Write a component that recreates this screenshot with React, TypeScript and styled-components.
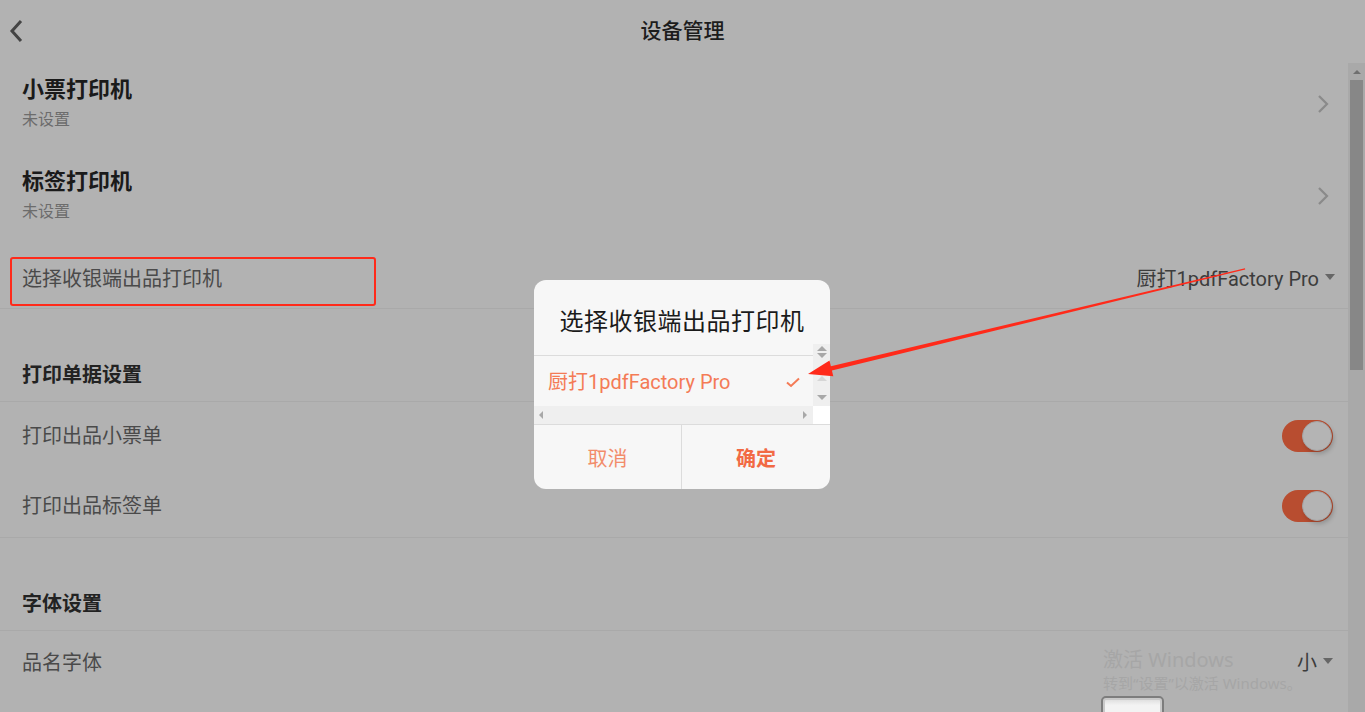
import React from 'react';
import styled, { createGlobalStyle } from 'styled-components';

const GlobalStyle = createGlobalStyle`
  html, body {
    margin: 0;
    padding: 0;
    height: 100%;
  }

  body {
    font-family: Roboto, "Noto Sans CJK SC", sans-serif;
    background: #b2b2b2;
    overflow: hidden;
  }

  #root {
    height: 100%;
  }
`;

const DIVIDER = '#a9a9a9';
const ORANGE = '#f47b56';

const BackIcon = () => (
  <svg width="16" height="24" viewBox="0 0 16 24">
    <path d="M13 2 L4 12 L13 22" fill="none" stroke="#444" strokeWidth="3" />
  </svg>
);

const ChevronIcon = () => (
  <svg width="14" height="20" viewBox="0 0 14 20">
    <path d="M3 2 L11 10 L3 18" fill="none" stroke="#8a8a8a" strokeWidth="2.2" />
  </svg>
);

const Caret = () => (
  <svg width="10" height="6" viewBox="0 0 10 6">
    <path d="M0 0 L10 0 L5 6 Z" fill="#666" />
  </svg>
);

const CheckIcon = () => (
  <svg width="14" height="11" viewBox="0 0 14 11">
    <path d="M1 5.5 L5 9 L13 1.5" fill="none" stroke={ORANGE} strokeWidth="2" />
  </svg>
);

const Arrow = () => (
  <ArrowLayer width="1365" height="712" viewBox="0 0 1365 712">
    <polygon
      points="1245,268.3 830.9,366.3 829.5,360.6 808,374 833.3,376.2 831.9,370.5 1245.2,269.6"
      fill="#ff2a1a"
    />
  </ArrowLayer>
);

const Toggle: React.FC = () => (
  <ToggleTrack>
    <ToggleKnob />
  </ToggleTrack>
);

export default function App() {
  return (
    <Page>
      <GlobalStyle />

      <Header>
        <BackButton>
          <BackIcon />
        </BackButton>

        <HeaderTitle>设备管理</HeaderTitle>
      </Header>

      <Body>
        <Content>
          <NavRow>
            <NavText>
              <NavTitle>小票打印机</NavTitle>
              <NavSub>未设置</NavSub>
            </NavText>
            <ChevronIcon />
          </NavRow>

          <NavRow>
            <NavText>
              <NavTitle>标签打印机</NavTitle>
              <NavSub>未设置</NavSub>
            </NavText>
            <ChevronIcon />
          </NavRow>

          <SelectRow>
            <HighlightBox />
            <RowLabel>选择收银端出品打印机</RowLabel>
            <SelectValue>
              厨打1pdfFactory Pro
              <Caret />
            </SelectValue>
          </SelectRow>

          <SectionHeader>打印单据设置</SectionHeader>

          <ToggleRow>
            <RowLabel>打印出品小票单</RowLabel>
            <Toggle />
          </ToggleRow>

          <ToggleRow $offset={4} $divided>
            <RowLabel>打印出品标签单</RowLabel>
            <Toggle />
          </ToggleRow>

          <SectionHeader>字体设置</SectionHeader>

          <ToggleRow $height={64}>
            <RowLabel>品名字体</RowLabel>
            <SelectValue>
              小
              <Caret />
            </SelectValue>
          </ToggleRow>

          <StepperRow>
            <StepperBox />
          </StepperRow>
        </Content>

        <ScrollTrack>
          <ScrollUp />
          <ScrollThumb />
        </ScrollTrack>
      </Body>

      <Watermark>
        <WatermarkTitle>激活 Windows</WatermarkTitle>
        <WatermarkSub>转到“设置”以激活 Windows。</WatermarkSub>
      </Watermark>

      <Dialog>
        <DialogTitle>选择收银端出品打印机</DialogTitle>

        <ListArea>
          <ListItem>厨打1pdfFactory Pro</ListItem>
          <CheckIcon />
        </ListArea>

        <HScroll>
          <HScrollBar>
            <SmallArrow $dir="left" />
            <SmallArrow $dir="right" />
          </HScrollBar>
          <ScrollCorner />
        </HScroll>

        <VScroll>
          <DoubleArrow>
            <SmallArrow $dir="up" />
            <SmallArrow $dir="down" />
          </DoubleArrow>
          <SmallArrow $dir="up" $faint />
          <SmallArrow $dir="down" />
        </VScroll>

        <DialogActions>
          <DialogButton>取消</DialogButton>
          <DialogButton $primary>确定</DialogButton>
        </DialogActions>
      </Dialog>

      <Arrow />
    </Page>
  );
}

const Page = styled.div`
  position: relative;
  height: 100vh;
  display: flex;
  flex-direction: column;
  background: #b2b2b2;
  overflow: hidden;
`;

const Header = styled.header`
  height: 63px;
  flex-shrink: 0;
  display: flex;
  align-items: center;
  justify-content: center;
  position: relative;
`;

const BackButton = styled.div`
  position: absolute;
  left: 8px;
  top: 19px;
  display: flex;
`;

const HeaderTitle = styled.h1`
  margin: 0;
  font-size: 21px;
  font-weight: 500;
  color: #1c1c1c;
  line-height: 28px;
  margin-top: -2px;
`;

const Body = styled.div`
  flex: 1;
  min-height: 0;
  display: flex;
`;

const Content = styled.div`
  flex: 1;
  overflow: hidden;
`;

const NavRow = styled.div`
  display: flex;
  align-items: center;
  justify-content: space-between;
  padding: 13px 18px 24px 22px;
  height: 55px;
`;

const NavText = styled.div`
  display: flex;
  flex-direction: column;
  gap: 5px;
`;

const NavTitle = styled.div`
  font-size: 22px;
  font-weight: 700;
  color: #1a1a1a;
  line-height: 28px;
`;

const NavSub = styled.div`
  font-size: 16px;
  color: #6c6c6c;
  line-height: 22px;
`;

const SelectRow = styled.div`
  position: relative;
  height: 62px;
  display: flex;
  align-items: center;
  justify-content: space-between;
  padding: 2px 13px 0 22px;
  border-bottom: 1px solid ${DIVIDER};
  box-sizing: border-box;
`;

const HighlightBox = styled.div`
  position: absolute;
  left: 10px;
  top: 10px;
  width: 362px;
  height: 45px;
  border: 2px solid #ff2a1a;
  border-radius: 3px;
`;

const RowLabel = styled.span`
  font-size: 20px;
  color: #4a4a4a;
  line-height: 26px;
`;

const SelectValue = styled.span`
  display: flex;
  align-items: center;
  gap: 6px;
  font-size: 20px;
  color: #3c3c3c;
  line-height: 26px;

  svg {
    margin-top: -4px;
  }
`;

const SectionHeader = styled.div`
  height: 93px;
  display: flex;
  align-items: flex-end;
  padding: 0 22px 13px;
  box-sizing: border-box;
  border-bottom: 1px solid ${DIVIDER};
  font-size: 20px;
  font-weight: 700;
  color: #222;
  line-height: 26px;
`;

const ToggleRow = styled.div<{ $offset?: number; $divided?: boolean; $height?: number }>`
  height: ${({ $height }) => $height ?? 68}px;
  display: flex;
  align-items: center;
  justify-content: space-between;
  padding: ${({ $offset }) => $offset ?? 0}px 15px 0 22px;
  box-sizing: border-box;
  border-bottom: ${({ $divided }) => ($divided ? `1px solid ${DIVIDER}` : 'none')};
`;

const StepperRow = styled.div`
  display: flex;
  justify-content: flex-end;
  padding: 1px 184px 0 0;
`;

const StepperBox = styled.div`
  width: 59px;
  height: 24px;
  border: 2px solid #7d7d7d;
  border-radius: 5px;
  background: linear-gradient(#d9d9d9, #f3f3f3 30%);
  box-shadow: inset 0 0 0 2px #c9c9c9;
`;

const ToggleTrack = styled.div`
  width: 51px;
  height: 32px;
  border-radius: 16px;
  background: #b84d30;
  display: flex;
  align-items: center;
  justify-content: flex-end;
  padding: 0 1px;
  box-sizing: border-box;
`;

const ToggleKnob = styled.div`
  width: 30px;
  height: 30px;
  border-radius: 50%;
  background: #b4b4b4;
  box-sizing: border-box;
  border: 1px solid #a4a4a4;
  box-shadow: 2px 3px 4px rgba(0, 0, 0, 0.18);
`;

const ScrollTrack = styled.div`
  width: 17px;
  flex-shrink: 0;
  background: #a9a9a9;
  display: flex;
  flex-direction: column;
  align-items: center;
`;

const ScrollUp = styled.div`
  margin-top: 7px;
  width: 0;
  height: 0;
  border-left: 4px solid transparent;
  border-right: 4px solid transparent;
  border-bottom: 4px solid #6f6f6f;
`;

const ScrollThumb = styled.div`
  margin-top: 6px;
  width: 13px;
  height: 290px;
  background: #878787;
`;

const Watermark = styled.div`
  position: absolute;
  left: 1103px;
  top: 647px;
  display: flex;
  flex-direction: column;
  pointer-events: none;
`;

const WatermarkTitle = styled.div`
  font-family: "Noto Sans", "Noto Sans CJK SC", sans-serif;
  font-size: 20px;
  line-height: 26px;
  color: #a6a6a6;
`;

const WatermarkSub = styled.div`
  font-family: "Noto Sans", "Noto Sans CJK SC", sans-serif;
  font-size: 15px;
  line-height: 20px;
  color: #a6a6a6;
`;

const Dialog = styled.div`
  position: absolute;
  left: 534px;
  top: 280px;
  width: 296px;
  background: #f7f7f7;
  border-radius: 12px;
  overflow: hidden;
  display: flex;
  flex-direction: column;
`;

const DialogTitle = styled.div`
  height: 76px;
  box-sizing: border-box;
  padding-top: 3px;
  display: flex;
  align-items: center;
  justify-content: center;
  border-bottom: 1px solid #dcdcdc;
  font-size: 24px;
  color: #1b1b1b;
  letter-spacing: 0.5px;
`;

const ListArea = styled.div`
  height: 50px;
  display: flex;
  align-items: center;
  justify-content: space-between;
  padding: 2px 30px 0 14px;
  box-sizing: border-box;
`;

const ListItem = styled.span`
  font-size: 20px;
  color: ${ORANGE};
  line-height: 26px;
`;

const HScroll = styled.div`
  height: 18px;
  display: flex;
`;

const HScrollBar = styled.div`
  flex: 1;
  background: #efefef;
  display: flex;
  align-items: center;
  justify-content: space-between;
  padding: 0 6px 0 5px;
`;

const ScrollCorner = styled.div`
  width: 17px;
  background: #fff;
`;

const VScroll = styled.div`
  position: absolute;
  right: 0;
  top: 64px;
  width: 17px;
  height: 62px;
  background: #efefef;
  display: flex;
  flex-direction: column;
  align-items: center;
  justify-content: space-between;
  padding: 2px 0 6px;
  box-sizing: border-box;
`;

const DoubleArrow = styled.div`
  display: flex;
  flex-direction: column;
  gap: 2px;
  margin-bottom: 4px;
`;

const SmallArrow = styled.div<{ $dir: 'up' | 'down' | 'left' | 'right'; $faint?: boolean }>`
  width: 0;
  height: 0;
  opacity: ${({ $faint }) => ($faint ? 0.35 : 1)};
  ${({ $dir }) => {
    const c = '#a8a8a8';
    if ($dir === 'up') return `border-left: 5px solid transparent; border-right: 5px solid transparent; border-bottom: 5px solid ${c};`;
    if ($dir === 'down') return `border-left: 5px solid transparent; border-right: 5px solid transparent; border-top: 5px solid ${c};`;
    if ($dir === 'left') return `border-top: 4px solid transparent; border-bottom: 4px solid transparent; border-right: 4px solid ${c};`;
    return `border-top: 4px solid transparent; border-bottom: 4px solid transparent; border-left: 4px solid ${c};`;
  }}
`;

const DialogActions = styled.div`
  height: 64px;
  display: grid;
  grid-template-columns: 147px 1fr;
  border-top: 1px solid #dcdcdc;
`;

const DialogButton = styled.div<{ $primary?: boolean }>`
  display: flex;
  align-items: center;
  justify-content: center;
  font-size: 20px;
  color: ${({ $primary }) => ($primary ? '#f26a44' : '#f28c6b')};
  font-weight: ${({ $primary }) => ($primary ? 700 : 400)};
  border-left: ${({ $primary }) => ($primary ? '1px solid #dcdcdc' : 'none')};
`;

const ArrowLayer = styled.svg`
  position: absolute;
  left: 0;
  top: 0;
  pointer-events: none;
`;
